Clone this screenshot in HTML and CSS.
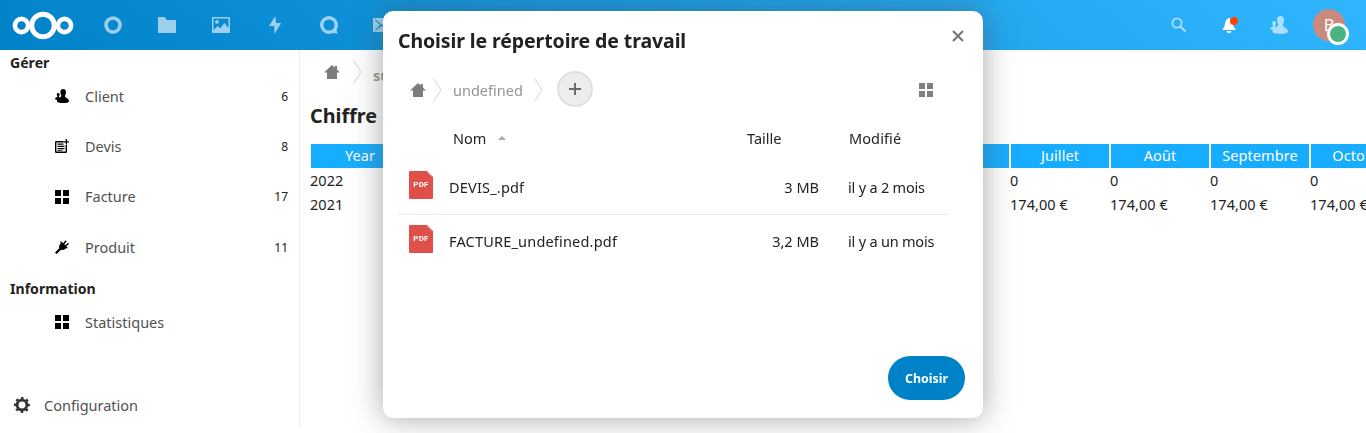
FILE: index.html
```html
<!DOCTYPE html>
<html lang="fr">
<head>
<meta charset="utf-8">
<title>Gestion</title>
<link rel="stylesheet" href="styles.css">
</head>
<body>
<svg class="defs" width="0" height="0">
  <defs>
    <symbol id="grid" viewBox="0 0 14 14"><path d="M0 0h6v6H0zM8 0h6v6H8zM0 8h6v6H0zM8 8h6v6H8z"/></symbol>
    <symbol id="home" viewBox="0 0 16 14"><path d="M8 0 0 7.4h3V14h10V7.4h3L13 4.6V1h-2.3v1.6z"/></symbol>
    <symbol id="people" viewBox="0 0 18 18"><path d="M10.5 0C8.300 0 6.900 1.600 6.900 3.800c0 1.500.3 2.800.9 3.700.4.7.4 1.700 0 2.300-.5.500-1.200.8-1.900 1.100-.5-.3-.9-.7-.9-1.100 0-.6 1-1.100 1-2.900C6 5.700 5.200 5 4.200 5S2.300 5.700 2.300 6.900c0 1.800.9 2.300.9 2.900C3.200 11 0 11.300 0 12.800c0 .6 1.200 1 2.800 1.200-.2.500-.3 1.100-.3 1.600C2.500 17 6 18 10.200 18s7.800-.8 7.800-2.400c0-3.500-4.300-3.900-5-5.600-.3-.8-.1-1.800.3-2.500.6-1 .8-2.200.8-3.700C14.100 1.600 12.700 0 10.500 0z"/></symbol>
    <symbol id="chevron" viewBox="0 0 9 24"><path d="M.5.500 8 12 .5 23.500" fill="none" stroke="#d4d4d4"/></symbol>
    <symbol id="pdf" viewBox="0 0 24 28"><path fill="#df5148" d="M1 0h17l6 6v21q0 1-1 1H1q-1 0-1-1V1q0-1 1-1z"/><path fill="#f0aaa5" d="m18 0 6 6h-1L18 1z"/></symbol>
  </defs>
</svg>

<header class="header">
  <svg class="logo" width="62" height="29" viewBox="0 0 62 29"><g fill="none" stroke="#fff"><circle cx="31" cy="14.500" r="11.300" stroke-width="5"/><circle cx="9.500" cy="14.500" r="6.600" stroke-width="4.600"/><circle cx="52.500" cy="14.500" r="6.600" stroke-width="4.600"/></g></svg>
  <nav class="apps">
    <svg width="18" height="18" viewBox="0 0 18 18"><circle cx="9" cy="9" r="7" fill="none" stroke="#fff" stroke-width="3.600"/></svg>
    <svg width="18" height="16" viewBox="0 0 18 16"><path d="M0 0h6.500l2.500 3h9v13H0z"/></svg>
    <svg width="18" height="16" viewBox="0 0 18 16"><path fill-rule="evenodd" d="M1 0h16q1 0 1 1v14q0 1-1 1H1q-1 0-1-1V1q0-1 1-1zM1.500 1.500v11.800L5.500 9l2.600 2.200L12.500 6l4 5.300V1.500zM5 3a1.900 1.900 0 1 1-.01 0z"/></svg>
    <svg width="14" height="18" viewBox="0 0 14 18"><path d="M7.300 0 1 10h5.300L6.500 18l6.700-11H8z"/></svg>
    <svg width="18" height="18" viewBox="0 0 18 18"><circle cx="9" cy="9" r="7.300" fill="none" stroke="#fff" stroke-width="3.400"/><path d="m15.800 12 2 5.500q-3 .5-5.800-1.300z"/></svg>
    <svg width="18" height="14" viewBox="0 0 18 14"><path fill-rule="evenodd" d="M0 0h18v14H0zM2 2l5 5-5 5 .6.600L8 8.500h2l5.400 4.100.6-.6-5-5 5-5-.6-.6L9 7 2.600 1.400z"/></svg>
  </nav>
  <div class="tools">
    <svg class="faded" width="16" height="16" viewBox="0 0 16 16"><circle cx="6" cy="6" r="4.600" fill="none" stroke="#fff" stroke-width="1.900"/><path d="m9.500 9.500 5 5" stroke="#fff" stroke-width="2.300"/></svg>
    <svg class="bell" width="16" height="17" viewBox="0 0 16 17"><path fill="#fff" d="M7 1Q3.500 2 3 6.500 2.800 10 .8 11.500V13h12.500v-1.500Q11 10 10.800 6.500L10 2zM4.500 14h5q-.5 2.300-2.500 2.300T4.500 14z"/><circle cx="12" cy="4" r="4" fill="#ff4402"/></svg>
    <svg class="faded contacts" width="18" height="18"><use href="#people"/></svg>
    <div class="avatar">B<span class="status"></span></div>
  </div>
</header>

<div class="body">
  <aside class="sidebar">
    <h2 class="caption">Gérer</h2>
    <ul class="menu">
      <li><svg width="14" height="14"><use href="#people"/></svg><span>Client</span><b>6</b></li>
      <li><svg width="14" height="14" viewBox="0 0 14 14"><path fill="none" stroke="#000" stroke-width="1.400" d="M8.500 2.700H1.200Q.7 2.700.7 3.200v9.600q0 .5.500.5h9.600q.5 0 .5-.5V6"/><path d="M2.500 4.500h6v1.200h-6zM2.500 6.800h7V8h-7zM2.500 9h7v1.200h-7zM2.500 11h5v.8h-5zM10.700 0H12v2.200h2v1.200h-2v2.100h-1.300V3.400H8.500V2.200h2.200z"/></svg><span>Devis</span><b>8</b></li>
      <li><svg width="14" height="14"><use href="#grid"/></svg><span>Facture</span><b>17</b></li>
      <li><svg width="14" height="14" viewBox="0 0 14 14"><path d="m0 12.500 4.300-4.300Q3.400 5 6 3L5 2l1-.8L8.200 3.300 10.500.3l1.200 1L9.300 4.200l1 1 2.800-2.400 1 1.200-2.900 2.300 1.600 1.500-.9.900-.8-.6Q9 11 6 9.700L1.500 14z"/></svg><span>Produit</span><b>11</b></li>
    </ul>
    <h2 class="caption info">Information</h2>
    <ul class="menu">
      <li><svg width="14" height="14"><use href="#grid"/></svg><span class="stats">Statistiques</span></li>
    </ul>
    <div class="settings"><svg width="16" height="16" viewBox="0 0 16 16"><circle cx="8" cy="8" r="4.900" fill="none" stroke="#333" stroke-width="2.900"/><circle cx="8" cy="8" r="6.900" fill="none" stroke="#333" stroke-width="2.100" stroke-dasharray="2.710 2.710" stroke-dashoffset="1.350"/></svg><span>Configuration</span></div>
  </aside>

  <main class="content">
    <div class="crumbs"><svg class="home" width="16" height="14"><use href="#home"/></svg><svg class="sep" width="9" height="24"><use href="#chevron"/></svg><b>su</b></div>
    <h1 class="title">Chiffre d'affaires</h1>
    <div class="table">
      <div class="row head"><span>Year</span><span></span><span></span><span></span><span></span><span></span><span></span><span>Juillet</span><span>Août</span><span>Septembre</span><span>Octobre</span></div>
      <div class="row"><span>2022</span><span></span><span></span><span></span><span></span><span></span><span></span><span>0</span><span>0</span><span>0</span><span>0</span></div>
      <div class="row"><span>2021</span><span></span><span></span><span></span><span></span><span></span><span></span><span>174,00 €</span><span>174,00 €</span><span>174,00 €</span><span>174,00 €</span></div>
    </div>
  </main>
</div>

<section class="dialog">
  <div class="dialog-head"><h2>Choisir le répertoire de travail</h2><svg width="12" height="12" viewBox="0 0 12 12"><path d="m1 1 10 10M11 1 1 11" stroke="#777" stroke-width="2.200"/></svg></div>
  <div class="path">
    <svg width="16" height="14" class="home"><use href="#home"/></svg><svg class="sep" width="9" height="24"><use href="#chevron"/></svg>
    <span>undefined</span><svg class="sep" width="9" height="24"><use href="#chevron"/></svg>
    <button class="add"><svg width="12" height="12" viewBox="0 0 12 12"><path d="M5 0h2v5h5v2H7v5H5V7H0V5h5z" fill="#6b6b6b"/></svg></button>
    <svg class="view" width="14" height="14"><use href="#grid"/></svg>
  </div>
  <div class="files-head"><span class="name">Nom<i class="sort"></i></span><span class="size">Taille</span><span class="date">Modifié</span></div>
  <div class="file"><div class="thumb"><svg width="24" height="28"><use href="#pdf"/></svg><em>PDF</em></div><span class="name devis">DEVIS_.pdf</span><span class="size">3 MB</span><span class="date">il y a 2 mois</span></div>
  <div class="file"><div class="thumb"><svg width="24" height="28"><use href="#pdf"/></svg><em>PDF</em></div><span class="name">FACTURE_undefined.pdf</span><span class="size">3,2 MB</span><span class="date">il y a un mois</span></div>
  <button class="choose">Choisir</button>
</section>
</body>
</html>
```
FILE: styles.css
```css
* { box-sizing: border-box; }
body { margin: 0; height: 433px; overflow: hidden; background: #fff; color: #222; font: 14.5px/24px "Noto Sans", "Open Sans", sans-serif; }
h1, h2, ul { margin: 0; padding: 0; list-style: none; }
svg { display: block; flex: none; }
.defs { position: absolute; }
button { border: 0; padding: 0; font-family: inherit; }

.header { height: 50px; display: flex; align-items: center; padding-left: 12px; background: linear-gradient(40deg, #0082c9 0%, #30b6ff 100%); }
.logo { margin-top: 1px; }
.apps { display: flex; margin-left: 12px; }
.apps svg { margin: 0 18px; fill: #fff; opacity: .6; align-self: center; }
.apps svg:nth-child(4) { margin: 0 20px; }
.apps svg:nth-child(6) { margin-left: 17px; }
.tools { display: flex; align-items: center; margin-left: auto; padding-right: 21px; }
.faded { opacity: .6; fill: #fff; }
.bell { margin-left: 35px; }
.contacts { margin: 0 25px 0 32px; }
.avatar { position: relative; width: 32px; height: 32px; border-radius: 50%; background: #ca8a7c; color: #fff; text-align: center; font-size: 16.5px; line-height: 32px; }
.status { position: absolute; left: 14px; top: 14px; width: 22px; height: 22px; border: 3px solid #fff; border-radius: 50%; background: #49b382; }

.body { display: flex; height: 383px; }
.sidebar { display: flex; flex-direction: column; flex: none; width: 300px; height: 377px; border-right: 1px solid #ebebeb; }
.caption { height: 21px; padding-left: 10px; font-size: 14.1px; font-weight: 700; line-height: 26px; }
.menu li { display: flex; align-items: center; height: 50.300px; padding: 0 11px 0 55px; color: #515151; }
.menu span { margin-left: 16px; padding-bottom: 1px; }
.menu b { margin-left: auto; padding-top: 1px; color: #222; font-size: 12px; font-weight: 400; }
.info { margin-top: 4px; }
.settings { display: flex; align-items: center; height: 44px; margin-top: auto; padding-left: 14px; color: #515151; }
.settings span { margin-left: 14px; }

.content { flex: none; width: 1066px; padding-left: 10px; overflow: hidden; }
.crumbs { display: flex; align-items: center; height: 44px; padding-left: 14px; }
.home { fill: #7c7c7c; }
.crumbs .sep { margin: 0 11px 0 13px; }
.crumbs b { color: #999; padding-top: 5px; }
.title { height: 50px; font-size: 19.8px; line-height: 44px; }
.table { width: 1100px; }
.row { display: grid; grid-template-columns: repeat(11, 100px); height: 24px; line-height: 24px; letter-spacing: .05px; }
.head { line-height: 22px; color: #fff; text-align: center; }
.head span { height: 24px; margin: 0 1px; background: #17adff; }

.dialog { position: fixed; left: 383px; top: 11px; width: 600px; height: 407px; padding: 15px; border-radius: 10px; background: #fff; box-shadow: 0 0 30px rgba(77, 77, 77, .5); }
.dialog-head { display: flex; align-items: center; justify-content: space-between; height: 30px; padding-right: 4px; }
.dialog-head h2 { font-size: 19.500px; line-height: 30px; letter-spacing: -.1px; }
.dialog-head svg { margin-bottom: 10px; }
.path { display: flex; align-items: center; height: 67px; padding: 0 35px 0 12px; color: #949494; }
.path .sep { margin: 0 11px 0 7px; }
.path span { padding-top: 1px; }
.path span + .sep { margin: 0 14px 0 11px; }
.add { display: grid; place-items: center; width: 36px; height: 36px; margin-bottom: 2px; border: 2px solid #e0e0e0; border-radius: 50%; background: #ededed; }
.view { margin-left: auto; fill: #808080; }
.files-head { display: flex; height: 37px; line-height: 30px; padding-left: 55px; }
.files-head .name { display: flex; align-items: center; height: 30px; width: 294px; }
.sort { margin-left: 12px; border: 4px solid transparent; border-top: 0; border-bottom-color: #aaa; }
.files-head .size { width: 102px; }
.files-head .date { letter-spacing: .1px; }
.file { display: flex; align-items: center; width: 550px; height: 54px; padding: 0 0 0 11px; }
.file + .file { height: 53px; border-top: 1px solid #ebebeb; }
.thumb { display: grid; margin-bottom: 5px; }
.thumb svg, .thumb em { grid-area: 1 / 1; }
.thumb em { color: #fff; font: normal 700 8px/28px Roboto, sans-serif; letter-spacing: .2px; text-align: center; }
.file .name { margin-left: 16px; width: 270px; letter-spacing: .19px; }
.file .size { width: 100px; text-align: right; }
.file .date { margin-left: 29px; white-space: nowrap; letter-spacing: -.2px; }
.choose { display: block; width: 77px; height: 44px; margin: 89px 3px 0 auto; border-radius: 22px; background: #0082c9; color: #fff; font-size: 12.400px; font-weight: 700; }
```
